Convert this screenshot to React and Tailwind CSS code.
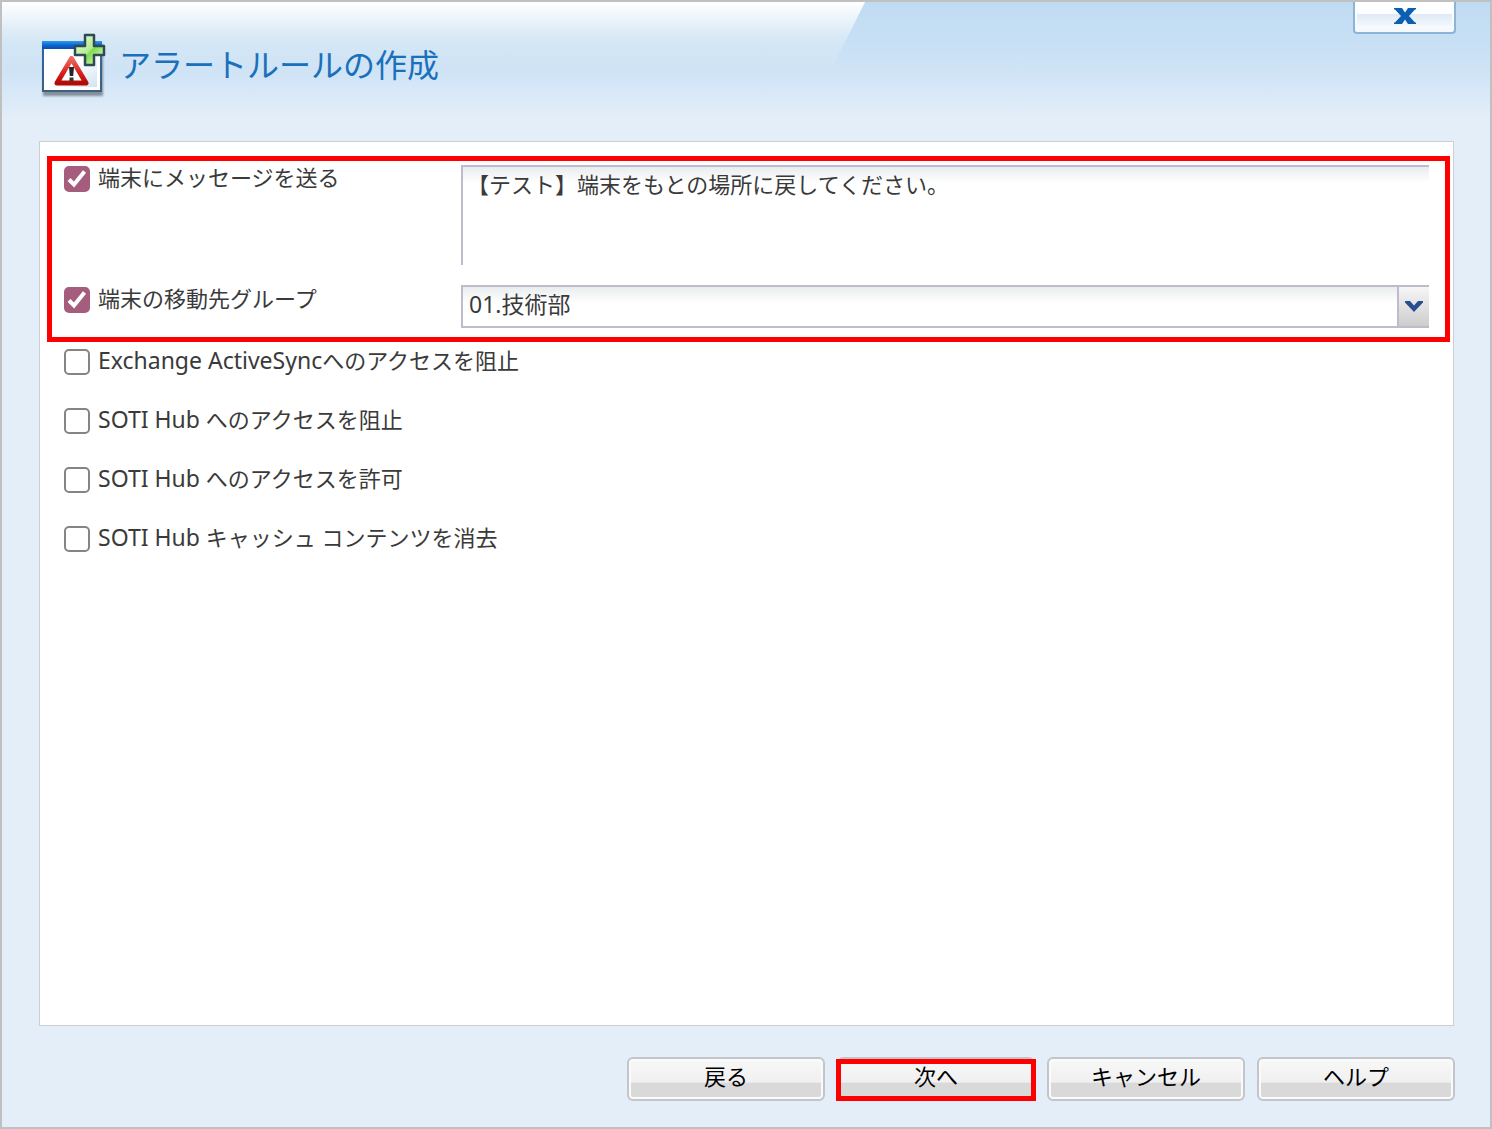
import React, { useState } from "react";

const accessOptions = [
  { id: "blockExchange", latin: "Exchange ActiveSync", label: "へのアクセスを阻止" },
  { id: "blockHub", latin: "SOTI Hub ", label: "へのアクセスを阻止" },
  { id: "allowHub", latin: "SOTI Hub ", label: "へのアクセスを許可" },
  { id: "clearHubCache", latin: "SOTI Hub ", label: "キャッシュ コンテンツを消去" },
];

const AlertIcon = () => (
  <svg className="w-[66px] h-[66px] shrink-0" viewBox="0 0 66 66" aria-hidden="true">
    <defs>
      <linearGradient id="bar" x1="0" y1="0" x2="0" y2="1">
        <stop offset="0" stopColor="#2b9bf0" />
        <stop offset="0.6" stopColor="#0a5fc8" />
        <stop offset="1" stopColor="#0b4cab" />
      </linearGradient>
      <linearGradient id="page" x1="0" y1="0" x2="1" y2="1">
        <stop offset="0.5" stopColor="#ffffff" />
        <stop offset="1" stopColor="#cfe3f3" />
      </linearGradient>
      <linearGradient id="frame" x1="0" y1="0" x2="0" y2="1">
        <stop offset="0" stopColor="#2f66a8" />
        <stop offset="1" stopColor="#3f5f7c" />
      </linearGradient>
      <linearGradient id="red" x1="0" y1="0" x2="0" y2="1">
        <stop offset="0" stopColor="#ea6a62" />
        <stop offset="0.6" stopColor="#d8201a" />
        <stop offset="1" stopColor="#b00c08" />
      </linearGradient>
      <linearGradient id="plus" x1="0" y1="0" x2="1" y2="1">
        <stop offset="0.2" stopColor="#d9f7c4" />
        <stop offset="0.5" stopColor="#b4ec92" />
        <stop offset="0.55" stopColor="#7fdb50" />
        <stop offset="0.8" stopColor="#c0f0a2" />
      </linearGradient>
      <filter id="soft" x="-10%" y="-10%" width="120%" height="120%">
        <feGaussianBlur stdDeviation="1" />
      </filter>
    </defs>
    <rect x="2" y="11" width="60" height="52" fill="#5f6b76" opacity="0.7" filter="url(#soft)" />
    <rect x="1" y="8" width="60" height="51" fill="url(#frame)" />
    <rect x="3" y="16" width="56" height="41" fill="#ffffff" />
    <rect x="5" y="17" width="51" height="37" fill="url(#page)" />
    <rect x="1" y="8" width="60" height="8" fill="url(#bar)" />
    <path d="M30.500 25.500L45 50H16Z" fill="#ffffff" stroke="url(#red)" strokeWidth="5" strokeLinejoin="round" />
    <path d="M28 34h5l-.8 9h-3.400z" fill="#20262c" />
    <rect x="28.500" y="44.500" width="4" height="3.500" fill="#30363c" />
    <path
      d="M44 2h9v11h10v9h-10v10h-9v-10h-10v-9h10z"
      fill="url(#plus)"
      stroke="#2f4a52"
      strokeWidth="2.500"
      strokeLinejoin="round"
    />
  </svg>
);

const CheckRow = ({ id, latin, label, checked, onChange }) => (
  <div className="flex items-center h-[26px]">
    <span className="relative w-[26px] h-[26px] shrink-0">
      <input
        id={id}
        type="checkbox"
        checked={checked}
        onChange={onChange}
        className="peer block appearance-none w-[26px] h-[26px] rounded-[5px] border-2 border-[#858585] bg-white checked:border-[#a55d7d] checked:bg-[#a55d7d]"
      />
      <svg
        className="absolute inset-0 hidden peer-checked:block pointer-events-none"
        viewBox="0 0 26 26"
        fill="none"
        stroke="#ffffff"
        strokeWidth="4"
      >
        <path d="M5 13.500l5 5L20.500 5.500" />
      </svg>
    </span>
    <label htmlFor={id} className="pl-2 pb-1 leading-[26px] whitespace-pre">
      {latin && <span className="text-[23px]">{latin}</span>}
      {label}
    </label>
  </div>
);

const DialogButton = ({ children, highlighted }) => (
  <button
    type="button"
    className="relative w-[198px] h-11 rounded-md border-2 border-[#c3c5c8] bg-linear-to-b from-[#f8f8f8] from-0% via-[#f0f0f0] via-58% to-[#d9d9d9] to-60% shadow-[inset_0_0_0_2px_#fafafa] pb-[6px] text-black"
  >
    {children}
    {highlighted && (
      <span className="absolute -inset-x-[3px] top-0 -bottom-[2px] border-[5px] border-[#ff0000]" />
    )}
  </button>
);

const App = () => {
  const [checkedItems, setCheckedItems] = useState({ sendMessage: true, moveGroup: true });
  const [message, setMessage] = useState("【テスト】端末をもとの場所に戻してください。");
  const [group, setGroup] = useState("01.技術部");

  const toggle = (id) => {
    setCheckedItems((prev) => ({ ...prev, [id]: !prev[id] }));
  };

  return (
    <div
      lang="ja"
      className="relative min-h-screen flex flex-col border-2 border-[#c0c0c0] bg-[#e3eef9] font-['Noto_Sans','Noto_Sans_CJK_JP',sans-serif] text-[22px] text-[#3a3a3a]"
    >
      <header className="relative h-[139px] flex items-start justify-between pl-[39px] pr-[34px] bg-linear-to-b from-[#bfdbf2] from-0% via-[#cee3f6] via-48% to-[#e3eef9] to-84%">
        {/* glossy sheen on the left part of the title bar */}
        <div className="absolute left-0 top-0 w-[58%] h-[70px] bg-linear-to-b from-white via-[#dcebf6]/80 to-[#d0e4f4]/0 [clip-path:polygon(0_0,100%_0,calc(100%-35px)_100%,0_100%)]" />
        <div className="relative flex items-center gap-3 pt-[31px]">
          <AlertIcon />
          <h1 className="text-[32px] leading-[40px] pb-[2px] font-normal text-[#1a70bb]">アラートルールの作成</h1>
        </div>
        <button
          type="button"
          aria-label="閉じる"
          className="relative w-[103px] h-8 flex justify-center pt-[6px] rounded-b border-2 border-t-0 border-[#8bb4d8] bg-linear-to-b from-white from-0% via-[#fbfdff] via-38% to-[#f5f9fd] to-100%"
        >
          <span className="absolute inset-x-[2px] top-3 h-3 bg-linear-to-b from-[#dfeaf6] to-[#f3f8fc]" />
          <svg className="relative w-[22px] h-4" viewBox="0 0 22 16" fill="#0a5fb0" aria-hidden="true">
            <path d="M0 0h8l3 4.500L14 0h8v1.500h-1L15 8l6 6.500h1V16h-8l-3-4.500L8 16H0v-1.500h1L7 8 1 1.500H0z" />
          </svg>
        </button>
      </header>

      <main className="flex-1 ml-[37px] mr-9 border border-[#cbcfd3] bg-white pt-[14px]">
        <section className="ml-[7px] mr-[3px] border-[5px] border-[#ff0000] pl-3 pr-4 pt-1 pb-[9px] flex flex-col gap-5">
          <div className="flex items-start">
            <div className="w-[397px] shrink-0 pt-px">
              <CheckRow
                id="sendMessage"
                label="端末にメッセージを送る"
                checked={!!checkedItems.sendMessage}
                onChange={() => toggle("sendMessage")}
              />
            </div>
            <textarea
              aria-label="メッセージ"
              value={message}
              onChange={(e) => setMessage(e.target.value)}
              className="block flex-1 min-w-0 h-[100px] resize-none border-t-2 border-l-2 border-[#bcbccd] bg-linear-to-b from-[#e9edee] to-white to-[16px] pl-1 pt-1 leading-[26px] outline-none"
            />
          </div>
          <div className="flex items-start">
            <div className="w-[397px] shrink-0 pt-[2px]">
              <CheckRow
                id="moveGroup"
                label="端末の移動先グループ"
                checked={!!checkedItems.moveGroup}
                onChange={() => toggle("moveGroup")}
              />
            </div>
            <div className="relative flex-1 min-w-0">
              <select
                aria-label="移動先グループ"
                value={group}
                onChange={(e) => setGroup(e.target.value)}
                className="block appearance-none w-full h-[43px] border-2 border-r-0 border-[#bcbccd] bg-linear-to-b from-[#e9edee] to-white to-[16px] pl-[6px] pb-1 text-[23px] outline-none"
              >
                <option>01.技術部</option>
              </select>
              <span className="absolute right-0 top-[2px] bottom-0 w-8 flex items-center justify-center border-l-2 border-b-2 border-[#bcbccd] bg-linear-to-b from-[#f6f6f6] from-0% via-[#e4e4e4] via-45% to-[#cdcdcd] to-100% pointer-events-none">
                <svg className="w-[18px] h-[11px]" viewBox="0 0 18 11" fill="#274f90">
                  <path d="M0 0h5l4 4.500L13 0h5v1.500L9 11 0 1.500z" />
                </svg>
              </span>
            </div>
          </div>
        </section>

        <div className="flex flex-col gap-[33px] pl-6 pt-[7px]">
          {accessOptions.map((option) => (
            <CheckRow
              key={option.id}
              id={option.id}
              latin={option.latin}
              label={option.label}
              checked={!!checkedItems[option.id]}
              onChange={() => toggle(option.id)}
            />
          ))}
        </div>
      </main>

      <footer className="flex justify-end gap-3 pt-[31px] pr-[35px] pb-[26px]">
        <DialogButton>戻る</DialogButton>
        <DialogButton highlighted>次へ</DialogButton>
        <DialogButton>キャンセル</DialogButton>
        <DialogButton>ヘルプ</DialogButton>
      </footer>
    </div>
  );
};

export default App;
